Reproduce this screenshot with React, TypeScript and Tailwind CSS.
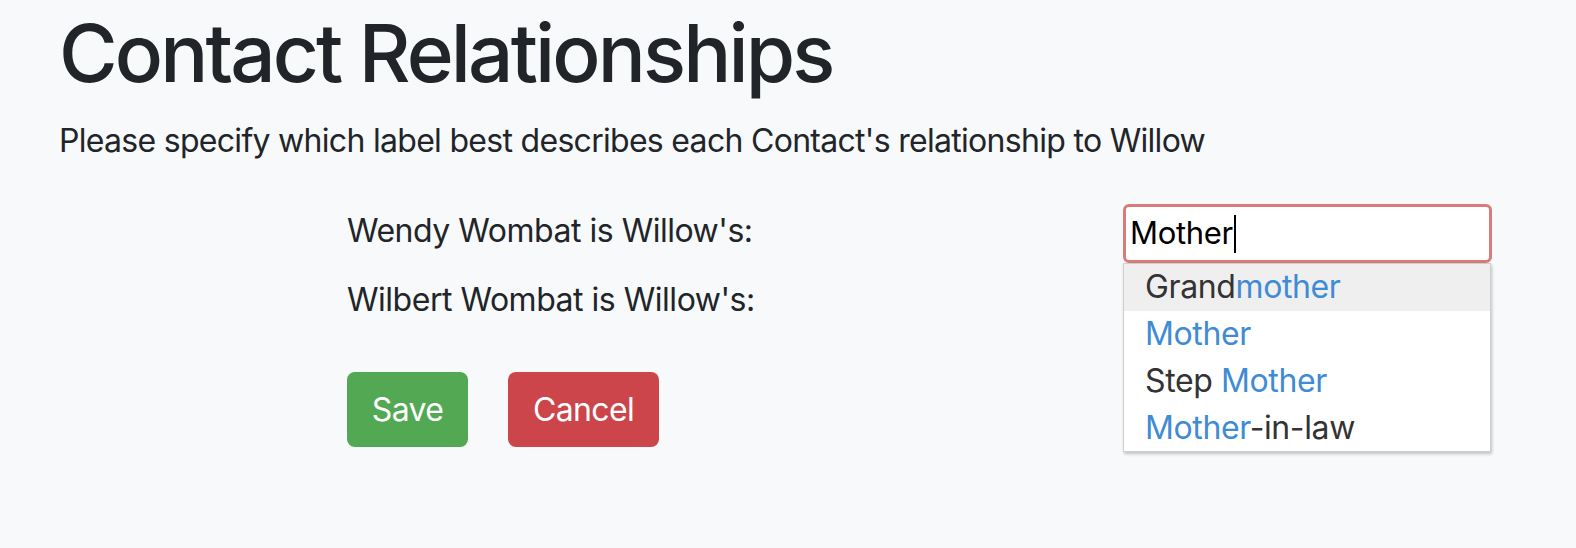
import React from 'react';

// One suggestion row: plain text and the matched part in blue
type Part = { text: string; match?: boolean };

const suggestions: Part[][] = [
  [{ text: 'Grand' }, { text: 'mother', match: true }],
  [{ text: 'Mother', match: true }],
  [{ text: 'Step ' }, { text: 'Mother', match: true }],
  [{ text: 'Mother', match: true }, { text: '-in-law' }],
];

const Suggestion = ({ parts, active }: { parts: Part[]; active: boolean }) => (
  <li className={`h-[46.75px] flex items-center pl-[21px] ${active ? 'bg-[#efefef]' : 'bg-white'}`}>
    <span className="whitespace-pre">
      {parts.map((p, i) => (
        <span key={i} className={p.match ? 'text-[#3f8bd5]' : 'text-[#333333]'}>
          {p.text}
        </span>
      ))}
    </span>
  </li>
);

const App: React.FC = () => {
  return (
    <div className="min-h-screen w-full bg-[#f8f9fa] text-[#212529] font-['Inter',sans-serif]">
      <div className="pl-[59px] pt-[5px]">
        <h1 className="text-[80px] leading-[96px] font-medium tracking-[-0.036em] mb-4">Contact Relationships</h1>
        <p className="text-[32px] leading-[48px] tracking-[-0.022em]">
          Please specify which label best describes each Contact's relationship to Willow
        </p>
      </div>

      <div className="pl-[347px] pr-[84px] mt-[39px]">
        {/* Row 1 with the open autocomplete */}
        <div className="flex items-start justify-between">
          <label className="text-[32px] leading-[48px] pt-[3px] tracking-[-0.015em]">Wendy Wombat is Willow's:</label>
          <div className="relative w-[369px]">
            <div className="h-[59px] bg-white border-[3px] border-[#d97c79] rounded-[6px] flex items-center pl-[4px] text-[31px] tracking-[-0.01em] text-black">
              <span>Mother</span>
              <span className="w-[2px] h-[38px] bg-black ml-[1px]" />
            </div>
            <ul className="absolute left-0 top-[59px] w-[368px] bg-white border border-[#cfcfcf] shadow-[1px_2px_3px_rgba(0,0,0,0.22)] text-[32px] tracking-[-0.012em]">
              {suggestions.map((s, i) => (
                <Suggestion key={i} parts={s} active={i === 0} />
              ))}
            </ul>
          </div>
        </div>

        <div className="mt-[13px]">
          <label className="text-[32px] leading-[48px] tracking-[-0.015em]">Wilbert Wombat is Willow's:</label>
        </div>

        <div className="flex gap-[40px] mt-[48px]">
          <button className="h-[75px] w-[121px] rounded-[8px] bg-[#53a853] text-white text-[32px] tracking-[-0.02em]">Save</button>
          <button className="h-[75px] w-[151px] rounded-[8px] bg-[#cb454a] text-white text-[32px] tracking-[-0.02em]">Cancel</button>
        </div>
      </div>
    </div>
  );
};

export default App;
